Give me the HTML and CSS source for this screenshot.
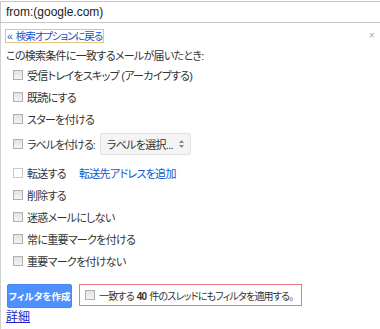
FILE: index.html
```html
<!DOCTYPE html>
<html lang="ja">
<head>
<meta charset="utf-8">
<link rel="stylesheet" href="styles.css">
</head>
<body>
<div class="page">
  <div class="query">from:(google.com)</div>
  <div class="panel">
    <div class="topline">
      <a class="back" href="#"><span class="raquo">«</span>検索オプションに戻る</a>
      <span class="close">×</span>
    </div>
    <div class="heading">この検索条件に一致するメールが届いたとき:</div>
    <div class="row"><span class="cb"></span><span>受信トレイをスキップ (アーカイブする)</span></div>
    <div class="row"><span class="cb"></span><span>既読にする</span></div>
    <div class="row"><span class="cb"></span><span>スターを付ける</span></div>
    <div class="row row-label"><span class="cb"></span><span class="lbl">ラベルを付ける:</span>
      <span class="select">ラベルを選択...<svg class="arrows" width="5" height="8" viewBox="0 0 5 8"><path d="M0 3 L2.5 0 L5 3 Z M0 5 L2.5 8 L5 5 Z" fill="#888"/></svg></span>
    </div>
    <div class="row row-fwd"><span class="cb cb-plain"></span><span>転送する</span><a class="addfwd" href="#">転送先アドレスを追加</a></div>
    <div class="row"><span class="cb"></span><span>削除する</span></div>
    <div class="row"><span class="cb"></span><span>迷惑メールにしない</span></div>
    <div class="row"><span class="cb"></span><span>常に重要マークを付ける</span></div>
    <div class="row"><span class="cb"></span><span>重要マークを付けない</span></div>
    <div class="actions">
      <span class="btn">フィルタを作成</span>
      <span class="apply"><span class="cb"></span><span>一致する <b>40</b> 件のスレッドにもフィルタを適用する。</span></span>
    </div>
    <a class="details" href="#">詳細</a>
  </div>
</div>
</body>
</html>
```
FILE: styles.css
```css
html, body {
  margin: 0;
  padding: 0;
  background: #fff;
}
body {
  font-family: "Liberation Sans", "Noto Sans CJK JP", sans-serif;
  font-size: 11px;
  letter-spacing: -0.7px;
  color: #333;
  font-feature-settings: "palt";
}
.page {
  width: 380px;
  height: 329px;
  overflow: hidden;
}
.query {
  margin-top: 1px;
  height: 20px;
  line-height: 20px;
  border: 1px solid #c8c8c8;
  border-right: none;
  padding-left: 5px;
  font-size: 12px;
  letter-spacing: 0;
  color: #222;
}
.panel {
  border-left: 1px solid #d0d0d0;
  padding-left: 5px;
  height: 320px;
}
.topline {
  display: flex;
  justify-content: space-between;
  align-items: center;
  padding-top: 5px;
  height: 15px;
}
.back {
  color: #15c;
  text-decoration: none;
  outline: 1px solid #e8c37a;
  line-height: 12px;
  padding: 0 1px;
  font-size: 10.5px;
  letter-spacing: -1.1px;
}
.raquo {
  margin-right: 4px;
}
.close {
  color: #aaa;
  font-size: 10px;
  margin-right: 6px;
}
.heading {
  margin-top: 5px;
  height: 16px;
  line-height: 16px;
}
.row {
  display: flex;
  align-items: center;
  height: 22px;
}
.cb {
  display: inline-block;
  width: 8px;
  height: 8px;
  border: 1px solid #b0b0b0;
  background: linear-gradient(#e2e2e2, #f4f4f4);
  margin: 0 4px 0 7px;
  flex: none;
}
.cb-plain {
  background: #fff;
  border-color: #c8c8c8;
}
.row-label {
  height: 27px;
}
.lbl {
  letter-spacing: -1px;
}
.row-fwd {
  height: 22px;
  padding-top: 5px;
}
.select {
  display: inline-flex;
  align-items: center;
  margin-left: 5px;
  height: 20px;
  padding: 0 6px 0 6px;
  background: #f4f4f4;
  border: 1px solid #e2e2e2;
  border-radius: 2px;
}
.arrows {
  margin-left: 6px;
}
.addfwd {
  color: #15c;
  text-decoration: none;
  margin-left: 13px;
}
.actions {
  display: flex;
  align-items: flex-start;
  margin-top: 12px;
  margin-left: 1px;
}
.btn {
  display: inline-flex;
  align-items: center;
  justify-content: center;
  width: 63px;
  height: 22px;
  background: #4d90fe;
  border: 1px solid #4a87ee;
  border-radius: 2px;
  color: #fff;
  font-weight: bold;
  font-size: 9.5px;
  letter-spacing: 0;
  white-space: nowrap;
}
.apply {
  display: inline-flex;
  align-items: center;
  margin-left: 7px;
  height: 20px;
  padding-right: 8px;
  border: 1px solid #e87a7a;
  font-size: 10px;
  letter-spacing: -0.8px;
  white-space: nowrap;
}
.apply .cb {
  margin-left: 5px;
}
.apply b {
  font-weight: bold;
  margin: 0 1px;
}
.details {
  display: inline-block;
  margin-top: 2px;
  line-height: 14px;
  color: #22c;
  text-decoration: underline;
  font-size: 12px;
  letter-spacing: 0;
}
```
